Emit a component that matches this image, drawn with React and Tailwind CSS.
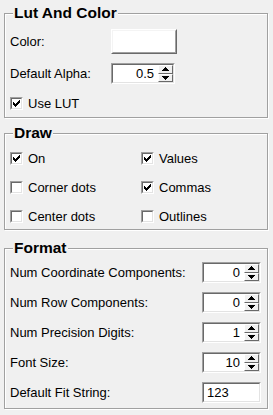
import React from 'react';

const CHECK_PIXELS = [
  [6, 0], [5, 1], [6, 1], [0, 2], [4, 2], [5, 2], [6, 2],
  [0, 3], [1, 3], [3, 3], [4, 3], [5, 3],
  [0, 4], [1, 4], [2, 4], [3, 4], [4, 4],
  [1, 5], [2, 5], [3, 5], [2, 6]
];

const CheckBox = ({ label, checked }) => (
  <div className="flex items-center h-[13px]">
    <div className="w-[13px] h-[13px] border border-t-[#a0a0a0] border-l-[#a0a0a0] border-r-white border-b-white">
      <div className="w-full h-full flex items-center justify-center bg-white border border-t-[#696969] border-l-[#696969] border-r-[#e3e3e3] border-b-[#e3e3e3]">
        {checked && (
          <svg width="7" height="7" viewBox="0 0 7 7" shapeRendering="crispEdges">
            {CHECK_PIXELS.map(([x, y]) => (
              <rect key={`${x}-${y}`} x={x} y={y} width="1" height="1" fill="#000" />
            ))}
          </svg>
        )}
      </div>
    </div>
    <span className="ml-[5px] leading-[15px]">{label}</span>
  </div>
);

const SpinButton = ({ up }) => (
  <div className="flex-1 flex items-center justify-center bg-[#f0f0f0] border border-t-white border-l-white border-r-[#696969] border-b-[#696969]">
    <svg width="7" height="4" viewBox="0 0 7 4" shapeRendering="crispEdges">
      {up ? <path d="M3 0h1v1h1v1h1v1h1v1H0V3h1V2h1V1h1z" fill="#000" /> : <path d="M0 0h7v1H6v1H5v1H4v1H3V3H2V2H1V1H0z" fill="#000" />}
    </svg>
  </div>
);

const Field = ({ width, children }) => (
  <div className={`h-[21px] ${width} border border-t-[#a0a0a0] border-l-[#a0a0a0] border-r-white border-b-white`}>
    <div className="h-full flex bg-white border border-t-[#696969] border-l-[#696969] border-r-[#e3e3e3] border-b-[#e3e3e3]">
      {children}
    </div>
  </div>
);

const SpinBox = ({ value, width }) => (
  <Field width={width}>
    <span className="flex-1 text-right pr-[4px] leading-[17px]">{value}</span>
    <div className="flex flex-col w-[15px]">
      <SpinButton up />
      <SpinButton />
    </div>
  </Field>
);

const Group = ({ title, className, children }) => (
  <div className={`relative w-[264px] border border-[#a0a0a0] shadow-[inset_1px_1px_0_#fff,1px_1px_0_#fff] ${className}`}>
    <span className="absolute left-[8px] -top-[10px] px-[1px] bg-[#f0f0f0] text-[15.5px] font-bold leading-[18px]">{title}</span>
    {children}
  </div>
);

const FormatRow = ({ label, children }) => (
  <div className="flex items-center h-[21px]">
    <span className="w-[192px]">{label}</span>
    {children}
  </div>
);

export default function App() {
  return (
    <div className="w-[273px] h-[415px] bg-[#f0f0f0] pl-[4px] pt-[13px] text-[13px] text-black font-['Liberation_Sans',Arial,sans-serif]">
      <Group title="Lut And Color" className="h-[105px] pl-[5px] pt-[15px]">
        <div className="flex items-center h-[25px]">
          <span className="w-[101px]">Color:</span>
          <div className="w-[66px] h-[25px] border border-t-white border-l-white border-r-[#696969] border-b-[#696969]">
            <div className="w-full h-full bg-white border border-t-[#f4f4f4] border-l-[#f4f4f4] border-r-[#a0a0a0] border-b-[#a0a0a0]" />
          </div>
        </div>
        <div className="flex items-center h-[21px] mt-[9px]">
          <span className="w-[101px]">Default Alpha:</span>
          <SpinBox value="0.5" width="w-[64px]" />
        </div>
        <div className="mt-[13px]">
          <CheckBox label="Use LUT" checked />
        </div>
      </Group>

      <Group title="Draw" className="h-[97px] mt-[15px] pl-[5px] pt-[18px]">
        <div className="grid grid-cols-[131px_1fr] gap-y-[16px]">
          <CheckBox label="On" checked />
          <CheckBox label="Values" checked />
          <CheckBox label="Corner dots" />
          <CheckBox label="Commas" checked />
          <CheckBox label="Center dots" />
          <CheckBox label="Outlines" />
        </div>
      </Group>

      <Group title="Format" className="h-[161px] mt-[18px] pl-[5px] pt-[13px]">
        <div className="flex flex-col gap-[9px]">
          <FormatRow label="Num Coordinate Components:">
            <SpinBox value="0" width="w-[59px]" />
          </FormatRow>
          <FormatRow label="Num Row Components:">
            <SpinBox value="0" width="w-[59px]" />
          </FormatRow>
          <FormatRow label="Num Precision Digits:">
            <SpinBox value="1" width="w-[59px]" />
          </FormatRow>
          <FormatRow label="Font Size:">
            <SpinBox value="10" width="w-[59px]" />
          </FormatRow>
          <FormatRow label="Default Fit String:">
            <Field width="w-[59px]">
              <span className="pl-[3px] leading-[17px]">123</span>
            </Field>
          </FormatRow>
        </div>
      </Group>
    </div>
  );
}
